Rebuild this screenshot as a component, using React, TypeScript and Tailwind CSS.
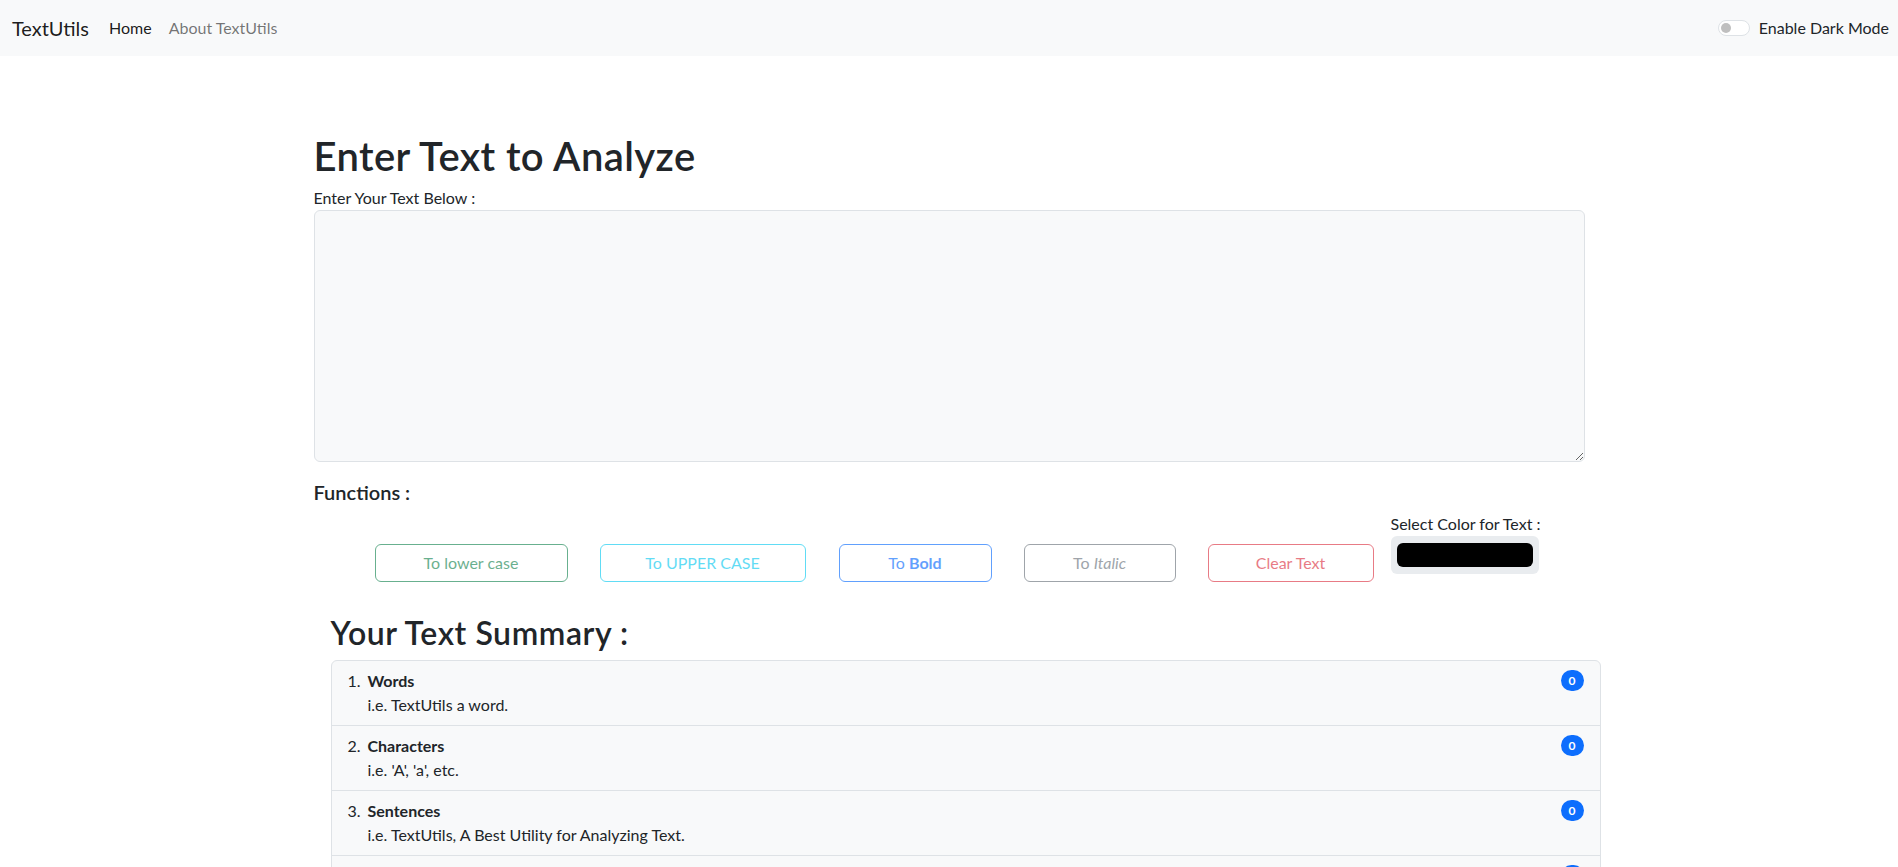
import { useState } from 'react'

/* ── Navbar ───────────────────────────────────────────────────────── */

function Navbar() {
  return (
    <nav className="h-[56px] bg-[#f8f9fa] flex items-center justify-between pl-[12px] pr-[9px]">
      <div className="flex items-center">
        <a className="text-[20px] leading-[30px] text-black/90">TextUtils</a>
        <div className="flex items-center ml-[20px] gap-[17px] text-[16px] leading-[24px]">
          <a className="text-black/90">Home</a>
          <a className="text-black/55">About TextUtils</a>
        </div>
      </div>
      <label className="flex items-center gap-[9px] text-[16px] leading-[24px] text-[#212529]">
        <span className="relative w-[32px] h-[16px] rounded-full border border-[#dee2e6] bg-white">
          <span className="absolute left-[2px] top-[2px] w-[10px] h-[10px] rounded-full bg-[#bfbfbf]" />
        </span>
        Enable Dark Mode
      </label>
    </nav>
  )
}

/* ── Boutons de fonctions ─────────────────────────────────────────── */

const btnBase =
  'mt-[32px] h-[38px] rounded-[6px] border bg-white text-[16px] leading-[24px] opacity-65 shrink-0'

function Functions() {
  return (
    <div className="flex items-start mt-[8px]">
      <button className={`${btnBase} ml-[61px] w-[193px] border-[#198754] text-[#198754]`}>
        To lower case
      </button>
      <button className={`${btnBase} ml-[32px] w-[206px] border-[#0dcaf0] text-[#0dcaf0]`}>
        To UPPER CASE
      </button>
      <button className={`${btnBase} ml-[33px] w-[153px] border-[#0d6efd] text-[#0d6efd]`}>
        To <b className="font-bold">Bold</b>
      </button>
      <button className={`${btnBase} ml-[32px] w-[152px] border-[#6c757d] text-[#6c757d]`}>
        To <i>Italic</i>
      </button>
      <button className={`${btnBase} ml-[32px] w-[166px] border-[#dc3545] text-[#dc3545]`}>
        Clear Text
      </button>
      {/* Sélecteur de couleur */}
      <div className="ml-[17px] flex flex-col">
        <span className="text-[16px] leading-[24px] text-[#212529] whitespace-nowrap">Select Color for Text :</span>
        <div className="w-[148px] h-[38px] rounded-[6px] bg-[#e9ecef] px-[6px] py-[7px]">
          <div className="w-full h-full rounded-[6px] bg-black" />
        </div>
      </div>
    </div>
  )
}

/* ── Résumé ───────────────────────────────────────────────────────── */

const summary = [
  { title: 'Words', desc: 'i.e. TextUtils a word.' },
  { title: 'Characters', desc: "i.e. 'A', 'a', etc." },
  { title: 'Sentences', desc: 'i.e. TextUtils, A Best Utility for Analyzing Text.' },
  { title: 'Paragraphs', desc: 'i.e. A block of text separated by new lines.' },
  { title: 'Reading Time', desc: 'i.e. Minutes needed to read the text.' },
]

function Summary() {
  return (
    <div className="ml-[17px] w-[1270px] mt-[32px]">
      <h2 className="text-[32px] leading-[38px] font-semibold tracking-[0.018em] text-[#212529] mb-[8px]">
        Your Text Summary :
      </h2>
      <ol className="rounded-[6px] border border-[#dee2e6] bg-[#f8f9fa]">
        {summary.map((s, i) => (
          <li
            key={s.title}
            className={`flex items-start justify-between px-[16px] py-[8px] ${i > 0 ? 'border-t border-[#dee2e6]' : ''}`}
          >
            <div className="flex text-[16px] leading-[24px] text-[#212529]">
              <span className="w-[20px]">{i + 1}.</span>
              <div>
                <div className="font-bold">{s.title}</div>
                <div>{s.desc}</div>
              </div>
            </div>
            <span className="mt-[1px] h-[21px] min-w-[23px] px-[7px] rounded-full bg-[#0d6efd] text-white text-[12px] leading-[21px] font-bold text-center">
              0
            </span>
          </li>
        ))}
      </ol>
    </div>
  )
}

/* ── Composant principal ──────────────────────────────────────────── */

export default function App() {
  const [text, setText] = useState('')

  return (
    <div className="min-h-screen bg-white text-[#212529] font-['Lato',sans-serif]">
      <Navbar />
      <main className="w-[1271px] mx-auto pt-[76px] pb-[40px]">
        <h1 className="text-[40px] leading-[48px] font-semibold tracking-[0.01em] text-[#212529] mb-[6px]">
          Enter Text to Analyze
        </h1>
        <label className="block text-[16px] leading-[24px]">Enter Your Text Below :</label>
        <textarea
          value={text}
          onChange={(e) => setText(e.target.value)}
          className="block w-full h-[252px] rounded-[6px] border border-[#dee2e6] bg-[#f8f9fa] px-[12px] py-[6px] text-[16px] outline-none"
        />
        <h5 className="mt-[18px] text-[20px] leading-[24px] font-semibold">Functions :</h5>
        <Functions />
        <Summary />
      </main>
    </div>
  )
}
